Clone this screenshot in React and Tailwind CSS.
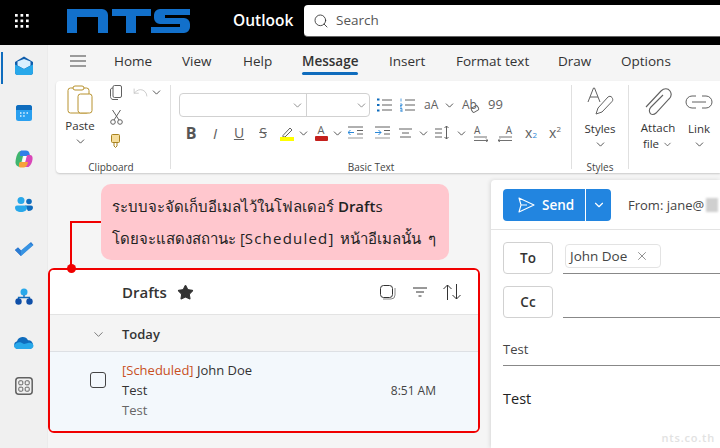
import React from "react";
import { ChevronDown, X, Star, Search, Undo } from "lucide-react";

const S = ({ w = 16, h = 16, children, className = "", vb }) => (
  <svg width={w} height={h} viewBox={vb || `0 0 ${w} ${h}`} fill="none" className={`shrink-0 ${className}`}>{children}</svg>
);
const Chev = ({ c = "text-[#333]", s = 13 }) => <ChevronDown size={s} strokeWidth={1.500} className={`shrink-0 ${c}`} />;

function Slot({ className, children }) {
  return <div className={`flex shrink-0 items-center justify-center ${className}`}>{children}</div>;
}

const gray = "#616161";

function Rail() {
  return (
    <div className="relative flex w-[48px] shrink-0 flex-col items-center border-r border-[#ebebeb] bg-[#f0f0f0] pt-[8px]">
      <div className="absolute left-[1px] top-[7px] h-[32px] w-[2px] bg-[#0f6cbd]" />
      <Slot className="h-[26px]">
        <S w={20} h={20}>
          <path d="M10 .5 19 6V16a3 3 0 0 1-3 3H4a3 3 0 0 1-3-3V6Z" fill="#0f5cab" />
          <path d="M3.500 5.500 10 3l6.500 2.500v4L10 13 3.500 9.500Z" fill="#d8f0ff" />
          <path d="M1 8.500 10 13l9-4.500V16a3 3 0 0 1-3 3H4a3 3 0 0 1-3-3Z" fill="#28a8ea" />
        </S>
      </Slot>
      <Slot className="mt-[21px] h-[26px]">
        <S w={16} h={16}>
          <rect x="0" y="0" width="16" height="16" rx="2.500" fill="#2aa0f0" />
          <path d="M0 2.500A2.500 2.500 0 0 1 2.500 0h11A2.500 2.500 0 0 1 16 2.500V5H0Z" fill="#0f6cbd" />
          <path d="M4 8h1.500M7.200 8h1.500M10.500 8h1.500M4 11h1.500M7.200 11h1.500" stroke="#dff2ff" strokeWidth="1.500" />
        </S>
      </Slot>
      <Slot className="mt-[20px] h-[26px]">
        <S w={18} h={18}>
          <path d="M6 1h4L7 17H5a4.500 4.500 0 0 1-4.500-5C1 7 2.500 1 6 1Z" fill="#3fb56f" />
          <path d="M6 .5h5c2 0 3 1 3.500 3L15 6H5C5 3 5 1 6 .5Z" fill="#2f7fe8" />
          <path d="M12 5h3c2 0 3 2 2.500 4.500-.5 3-1.500 6-4 7.500H9Z" fill="#d946b8" />
          <path d="M5 12h8c-.5 3-2 5.500-4 5.500H5C3.500 17.500 3.500 13 5 12Z" fill="#f7a13b" />
          <path d="M8 6h3.500L9.800 12H6.500Z" fill="#fff" fillOpacity=".9" />
        </S>
      </Slot>
      <Slot className="mt-[20px] h-[26px]">
        <S w={20} h={18}>
          <circle cx="7" cy="4.500" r="3.500" fill="#28a8ea" />
          <circle cx="15" cy="5.500" r="2.800" fill="#0f6cbd" />
          <path d="M11 9.500h6a2 2 0 0 1 2 2c0 2-1.500 3.500-5 3.500Z" fill="#0f6cbd" />
          <path d="M3 9.500h8a2 2 0 0 1 2 2c0 3-2.500 4.500-6 4.500s-6-1.500-6-4.500a2 2 0 0 1 2-2Z" fill="#28a8ea" />
        </S>
      </Slot>
      <Slot className="mt-[19px] h-[26px]">
        <S w={20} h={16}>
          <path d="M1 8l3-2.500 3 3L7 14Z" fill="#185abd" />
          <path d="M4 5.500 7 8.500 17 0l2.500 3L7 14 1 8Z" fill="#2b7cd3" />
          <path d="M7 8.500 15 2 19 3 7 14Z" fill="#41a5ee" fillOpacity=".6" />
        </S>
      </Slot>
      <Slot className="mt-[21px] h-[26px]">
        <S w={18} h={18}>
          <circle cx="9" cy="4" r="3.500" fill="#28a8ea" />
          <path d="M9 7v3M3.500 11V9.500h11V11" stroke="#0f6cbd" strokeWidth="1.300" />
          <circle cx="3.500" cy="13.500" r="3.200" fill="#0f4fa8" />
          <circle cx="14.500" cy="13.500" r="3.200" fill="#0f4fa8" />
        </S>
      </Slot>
      <Slot className="mt-[20px] h-[26px]">
        <S w={21} h={14}>
          <path d="M5 13a4 4 0 0 1-1-7.800 6 6 0 0 1 11-1A4.500 4.500 0 0 1 20 9c0 2-1 4-4 4Z" fill="#0f6cbd" />
          <path d="M1 9.500c2-3 5-4 7-3l3 1.500 4-1c3-.5 5 .5 5.500 2.500 0 2-1.500 3.500-4 3.500H5c-2.500 0-4-1.500-4-3.500Z" fill="#28a8ea" />
        </S>
      </Slot>
      <Slot className="mt-[17px] h-[26px]">
        <S w={18} h={18}>
          <rect x=".8" y=".8" width="16.400" height="16.400" rx="3" stroke={gray} strokeWidth="1.500" />
          <rect x="3.800" y="3.800" width="4" height="4" rx="1" stroke={gray} />
          <rect x="10.200" y="3.800" width="4" height="4" rx="1" stroke={gray} />
          <rect x="3.800" y="10.200" width="4" height="4" rx="1" stroke={gray} />
          <rect x="10.200" y="10.200" width="4" height="4" rx="1" stroke={gray} />
        </S>
      </Slot>
    </div>
  );
}

function TopBar() {
  return (
    <div className="flex h-[45px] shrink-0 items-center bg-black pb-[3px]">
      <Slot className="ml-[14px] h-[16px] w-[16px]">
        <svg width="16" height="16" viewBox="0 0 16 16" fill="#fff">
          {[1, 6.500, 12].flatMap((x) => [1, 6.500, 12].map((y) => <rect key={`${x}${y}`} x={x} y={y} width="2.700" height="2.700" />))}
        </svg>
      </Slot>
      <svg width="124" height="24" viewBox="0 0 124 24" fill="#1270cb" className="ml-[37px] shrink-0">
        <path d="M0 0H35a6 6 0 0 1 6 6V24H31V8H10V24H0Z" />
        <path d="M45 0H84V7H69V24H59V7H45Z" />
        <path d="M93 0H123V6H98V9H117a6 6 0 0 1 6 6v3a6 6 0 0 1-6 6H84V18H113V15H93a6 6 0 0 1-6-6V6a6 6 0 0 1 6-6Z" />
      </svg>
      <span className="ml-[42px] w-[59px] shrink-0 whitespace-nowrap text-[15.500px] font-semibold text-white">Outlook</span>
      <div className="ml-[12px] flex h-[32px] flex-1 items-center rounded-l-[4px] border-b border-[#666] bg-white pl-[9px] text-[13.500px] text-[#555]">
        <Search size={16} strokeWidth={1.300} className="text-[#333]" />
        <span className="ml-[7px]">Search</span>
      </div>
    </div>
  );
}

function Tabs() {
  return (
    <div className="flex h-[36px] shrink-0 items-center pb-[4px]">
      <S w={16} h={12} className="ml-[22px]">
        <path d="M0 1H16M0 6H16M0 11H16" stroke="#424242" strokeWidth="1.200" />
      </S>
      <div className="ml-[28px] flex items-center text-[13.500px] text-[#333]">
        <span className="w-[68px]">Home</span>
        <span className="w-[61px]">View</span>
        <span className="w-[59px]">Help</span>
        <span className="relative w-[87px] font-semibold">Message
          <span className="absolute left-0 top-[21px] h-[3px] w-[56px] rounded-full bg-[#0f6cbd]" />
        </span>
        <span className="w-[67px]">Insert</span>
        <span className="w-[102px]">Format text</span>
        <span className="w-[63px]">Draw</span>
        <span>Options</span>
      </div>
    </div>
  );
}

const Sep = () => <div className="my-[4px] w-px shrink-0 bg-[#e0e0e0]" />;
const GroupLabel = ({ children, className = "" }) => (
  <div className={`absolute bottom-[-1px] flex justify-center whitespace-nowrap text-[10px] leading-[14px] text-[#444] ${className}`}>{children}</div>
);

function Clipboard() {
  return (
    <div className="relative flex w-[114px] shrink-0">
      <div className="ml-[10px] flex w-[28px] flex-col items-center">
        <S w={26} h={29} className="mt-[4px]">
          <rect x="1" y="3" width="21" height="25" rx="2.500" stroke="#b8922e" />
          <rect x="6" y="1" width="11" height="4" rx="2" fill="#fff" stroke="#b8922e" />
          <rect x="11" y="9" width="14" height="19" rx="2.500" fill="#fff" stroke="#b8922e" />
        </S>
        <span className="mt-[3px] text-[11.500px] leading-[17px] text-[#333]">Paste</span>
        <div className="mt-[1px]"><Chev /></div>
      </div>
      <div className="ml-[11px] flex w-[58px] flex-col">
        <div className="mt-[1px] flex h-[20px] items-center">
          <Slot className="w-[22px]">
            <S w={12} h={15}>
              <rect x="3" y=".5" width="8.500" height="12" rx="1.500" stroke={gray} />
              <path d="M3 3C1.500 3 .5 3.500.5 5v6.500C.5 13 1.500 14.500 3 14.500h5" stroke={gray} />
            </S>
          </Slot>
          <Slot className="ml-[4px] w-[18px]"><Undo size={17} strokeWidth={1.200} className="text-[#c4c4c4]" /></Slot>
          <Slot className="w-[14px]"><Chev /></Slot>
        </div>
        <Slot className="mt-[5px] h-[20px] w-[22px]">
          <S w={13} h={15}>
            <circle cx="3" cy="12" r="2.300" stroke={gray} />
            <circle cx="10" cy="12" r="2.300" stroke={gray} />
            <path d="M4 10 10.500 0M9 10 2.500 0" stroke={gray} />
          </S>
        </Slot>
        <Slot className="mt-[4px] h-[20px] w-[22px]">
          <S w={10} h={14}>
            <rect x=".5" y=".5" width="8" height="8" rx="1" stroke="#a8821e" fill="#f5dd9c" />
            <path d="M3 8.500V12l1.500 1.500L6 12V8.500" stroke="#a8821e" />
          </S>
        </Slot>
      </div>
      <GroupLabel className="left-[34px] w-[42px]">Clipboard</GroupLabel>
    </div>
  );
}

const Arrowed = ({ left }) => (
  <div className={`flex w-[14px] flex-col ${left ? "items-end" : "items-start"}`}>
    <span className="text-[10px] leading-[10px] text-[#616161]">A</span>
    <S w={14} h={6} className="mt-[1px]">
      {left ? (
        <path d="M1 1H14M0 4.500H14M2 2.500 0 4.500 2 6" stroke={gray} strokeWidth=".9" />
      ) : (
        <path d="M0 1H13M0 4.500H14M12 2.500 14 4.500 12 6" stroke={gray} strokeWidth=".9" />
      )}
    </S>
  </div>
);

function BasicText() {
  return (
    <div className="relative w-[400px] shrink-0">
      <div className="ml-[8px] mt-[12px] flex h-[24px] items-center">
        <div className="flex h-[24px] w-[191px] shrink-0 rounded-[4px] border border-[#d1d1d1]">
          <div className="flex w-[127px] items-center justify-end border-r border-[#d1d1d1] pr-[2px]"><Chev c="text-[#777]" /></div>
          <div className="flex flex-1 items-center justify-end pr-[1px]"><Chev c="text-[#777]" /></div>
        </div>
        <Slot className="ml-[6px] w-[16px]">
          <S w={15} h={14}>
            <path d="M0 1.500h2.500M0 7h2.500M0 12.500h2.500" stroke="#0f6cbd" strokeWidth="2.200" />
            <path d="M5 2H15M5 7H15M5 12H15" stroke={gray} />
          </S>
        </Slot>
        <Slot className="ml-[8px] w-[15px]">
          <S w={15} h={14}>
            <path d="M1 .5v3M0 6h2v1.500H0V9h2M0 10.500h2V14H0M0 12.200h2" stroke="#2b88d8" strokeWidth=".8" />
            <path d="M5 2H15M5 7H15M5 12H15" stroke={gray} />
          </S>
        </Slot>
        <span className="ml-[9px] w-[14px] shrink-0 whitespace-nowrap text-[12px] text-[#616161]">aA</span>
        <Slot className="ml-[5px] w-[12px]"><Chev /></Slot>
        <span className="relative ml-[7px] w-[15px] shrink-0 whitespace-nowrap text-[12px] text-[#616161]">Ab
          <span className="absolute bottom-[2px] right-[-2px] h-[6px] w-[8px] rotate-[-30deg] rounded-[2px] border border-[#616161]" />
        </span>
        <span className="ml-[11px] shrink-0 text-[13px] text-[#616161]">99</span>
      </div>
      <div className="ml-[8px] mt-[4px] flex h-[24px] items-center text-[#616161]">
        <Slot className="w-[24px] text-[16px] font-bold leading-none text-[#555]">B</Slot>
        <Slot className="w-[24px] text-[15px] italic leading-none">I</Slot>
        <Slot className="w-[24px] text-[14px] leading-none underline">U</Slot>
        <Slot className="w-[24px] text-[14px] leading-none line-through">S</Slot>
        <Slot className="w-[24px]">
          <S w={14} h={15}>
            <path d="M3 9.500 10 2l2 2-7 7H3Z" stroke={gray} />
            <rect y="11" width="14" height="4" fill="#ffff00" />
          </S>
        </Slot>
        <Slot className="w-[8px]"><Chev /></Slot>
        <Slot className="ml-[2px] w-[24px]">
          <div className="flex flex-col items-center">
            <span className="text-[11px] leading-[10px]">A</span>
            <span className="mt-[1px] h-[5px] w-[13px] rounded-[1px] bg-[#c4201c]" />
          </div>
        </Slot>
        <Slot className="w-[8px]"><Chev /></Slot>
        <Slot className="ml-[2px] w-[24px]">
          <S w={15} h={14}>
            <path d="M0 1H15M9 4.500H15M9 8H15" stroke={gray} />
            <path d="M6 6.500H0M2.500 4 0 6.500 2.500 9" stroke="#2b88d8" />
            <path d="M0 12H15" stroke="#bbb" strokeWidth="1.500" />
          </S>
        </Slot>
        <Slot className="ml-[3px] w-[24px]">
          <S w={15} h={14}>
            <path d="M0 1H15M9 4.500H15M9 8H15" stroke={gray} />
            <path d="M0 6.500H6M3.500 4 6 6.500 3.500 9" stroke="#2b88d8" />
            <path d="M0 12H15" stroke="#bbb" strokeWidth="1.500" />
          </S>
        </Slot>
        <Slot className="ml-[-1px] w-[24px]">
          <S w={13} h={12}><path d="M0 2H13M3 6H10M1 10H12" stroke={gray} /></S>
        </Slot>
        <Slot className="ml-[2px] w-[8px]"><Chev /></Slot>
        <Slot className="ml-[3px] w-[24px]">
          <S w={14} h={14}>
            <path d="M0 3H7M0 7H7M0 11H7" stroke={gray} />
            <path d="M11.500 0V13M9.500 2 11.500 0 13.500 2M9.500 11 11.500 13 13.500 11" stroke={gray} />
          </S>
        </Slot>
        <Slot className="ml-[3px] w-[8px]"><Chev /></Slot>
        <Slot className="ml-[4px] w-[24px]"><Arrowed /></Slot>
        <Slot className="w-[24px]"><Arrowed left /></Slot>
        <Slot className="ml-[2px] w-[24px] text-[14px] leading-none">x<sub className="text-[8px] text-[#2b88d8]">2</sub></Slot>
        <Slot className="w-[24px] text-[14px] leading-none">x<sup className="text-[8px] text-[#616161]">2</sup></Slot>
      </div>
      <GroupLabel className="left-[170px] w-[60px]">Basic Text</GroupLabel>
    </div>
  );
}

function Styles() {
  return (
    <div className="relative flex w-[56px] shrink-0 flex-col items-center">
      <S w={27} h={29} className="mt-[6px]">
        <path d="M1 15 6.500 1h1L13 15M3 10h8" stroke={gray} />
        <path d="M9 27l2-6L21 10c1-1 3-1 4 .5s1 3 0 4L15 25Z" stroke={gray} fill="#fff" />
      </S>
      <span className="mt-[4px] text-[11.500px] leading-[17px] text-[#333]">Styles</span>
      <div className="mt-[1px]"><Chev /></div>
      <GroupLabel className="left-0 w-full">Styles</GroupLabel>
    </div>
  );
}

function Attach() {
  return (
    <div className="flex flex-1 pl-[11px]">
      <div className="flex w-[36px] shrink-0 flex-col items-center">
        <S w={30} h={29} className="mt-[6px]">
          <path d="M3 20 18 4c3-3 7-3 9 0s1 6-1 8L13 26c-2 2-5 2-6 0s-1-4 1-6L20 8" stroke={gray} strokeWidth="1.100" />
        </S>
        <span className="mt-[4px] text-[11.500px] leading-[16px] text-[#333]">Attach</span>
        <span className="flex items-center gap-[3px] text-[11.500px] leading-[16px] text-[#333]">file <Chev s={11} /></span>
      </div>
      <div className="ml-[8px] flex w-[30px] shrink-0 flex-col items-center">
        <S w={28} h={14} className="mt-[14px]">
          <path d="M11 1H7a6 6 0 0 0 0 12h4M17 1h4a6 6 0 0 1 0 12h-4M7 7H21" stroke={gray} />
        </S>
        <span className="mt-[11px] text-[11.500px] leading-[17px] text-[#333]">Link</span>
        <div className="mt-[1px]"><Chev /></div>
      </div>
    </div>
  );
}

function Ribbon() {
  return (
    <div className="ml-[8px] flex h-[92px] shrink-0 rounded-l-[4px] bg-white shadow-[0_1px_2px_rgba(0,0,0,0.18)]">
      <Clipboard />
      <Sep />
      <BasicText />
      <Sep />
      <Styles />
      <Sep />
      <Attach />
    </div>
  );
}

function Drafts() {
  return (
    <div className="relative mt-[8px] w-[432px] overflow-hidden rounded-[6px] border-2 border-[#f00000] bg-white">
      <div className="flex h-[45px] items-center border-b border-[#e3e3e3] bg-white pl-[72px] pr-[17px]">
        <span className="text-[15px] font-semibold text-[#333]">Drafts</span>
        <Star size={17} fill="#333" strokeWidth={1.500} className="ml-[10px] text-[#333]" />
        <S w={16} h={16} className="ml-auto">
          <rect x=".5" y="1.500" width="12" height="12" rx="3" stroke="#333" />
          <path d="M3 15h8a4 4 0 0 0 4-4V4" stroke="#888" />
        </S>
        <S w={14} h={10} className="ml-[17px]"><path d="M0 1H14M3 5H11M5.500 9H8.500" stroke="#333" /></S>
        <S w={18} h={16} className="ml-[16px]">
          <path d="M4.500 16V1M.5 5 4.500 1 8.500 5M13.500 0V15M9.500 11 13.500 15 17.500 11" stroke="#333" />
        </S>
      </div>
      <div className="flex h-[37px] items-center border-b border-[#dde0e4] bg-[#f4f4f4] pl-[41px] pt-[3px]">
        <ChevronDown size={15} strokeWidth={1.100} className="text-[#444]" />
        <span className="ml-[16px] text-[13px] font-semibold text-[#333]">Today</span>
      </div>
      <div className="flex h-[79px] items-start bg-[#f3f8fc] pl-[40px] pr-[42px]">
        <div className="mt-[20px] h-[16px] w-[16px] shrink-0 rounded-[3px] border-[1.500px] border-[#444]" />
        <div className="ml-[16px] flex flex-1 flex-col pt-[8px] text-[13px] leading-[20px] text-[#333]">
          <div><span className="text-[#c8501e]">[Scheduled]</span> John Doe</div>
          <div>Test</div>
          <div className="text-[#666]">Test</div>
        </div>
        <span className="mt-[29px] text-[12px] leading-[20px] text-[#444]">8:51 AM</span>
      </div>
    </div>
  );
}

function LeftPane() {
  return (
    <div className="relative w-[443px] shrink-0 pt-[11px]">
      <div className="ml-[53px] flex h-[76px] w-[348px] flex-col justify-center gap-[3px] rounded-[10px] bg-[#ffc7ce] pl-[11px] text-[15px] leading-[29px] text-[#222]">
        <div>ระบบจะจัดเก็บอีเมลไว้ในโฟลเดอร์ <span className="font-semibold">Draft</span>s</div>
        <div>โดยจะแสดงสถานะ [<span className="font-medium tracking-[1.200px]">Scheduled</span>] <span className="ml-[3px]">หน้าอีเมลนั้น</span> <span className="ml-[3px]">ๆ</span></div>
      </div>
      <div className="absolute left-[22px] top-[48px] h-[47px] w-[31px] border-l-2 border-t-2 border-[#f00000]" />
      <div className="absolute left-[19px] top-[91px] z-10 h-[9px] w-[9px] rounded-full bg-[#f00000]" />
      <Drafts />
    </div>
  );
}

function Compose() {
  return (
    <div className="mt-[7px] flex flex-1 flex-col overflow-hidden rounded-tl-[4px] bg-white shadow-[-1px_0_4px_rgba(0,0,0,0.12)]">
      <div className="flex h-[50px] shrink-0 items-start border-b border-[#e3e3e3] pl-[12px] pt-[9px]">
        <div className="flex h-[32px] w-[108px] shrink-0 rounded-[4px] bg-[#2285e0] text-white">
          <div className="flex w-[83px] items-center border-r border-white pl-[15px]">
            <S w={17} h={16}><path d="M1 1 16 8 1 15 3 8ZM3 8H9" stroke="#fff" strokeWidth="1.100" strokeLinejoin="round" /></S>
            <span className="ml-[7px] text-[13.500px] font-semibold">Send</span>
          </div>
          <div className="flex flex-1 items-center justify-center"><ChevronDown size={14} strokeWidth={2} /></div>
        </div>
        <span className="ml-[17px] mt-[6px] whitespace-nowrap text-[13px] font-medium leading-[20px] text-[#444]">From: jane@</span>
        <div className="ml-[2px] mt-[9px] h-[14px] w-[12px] shrink-0 bg-[#cfcfcf] blur-[1px]" />
      </div>
      <div className="mt-[12px] flex shrink-0 pl-[12px]">
        <button className="h-[32px] w-[50px] rounded-[4px] border border-[#d1d1d1] text-[13.500px] font-semibold text-[#333]">To</button>
        <div className="ml-[10px] flex h-[32px] flex-1 items-start border-b border-[#888] pl-[2px] pt-[2px]">
          <div className="flex h-[24px] w-[96px] items-center rounded-[4px] border border-[#e3e3e3] pl-[4px] text-[13.500px] text-[#444]">
            John Doe <X size={14} strokeWidth={1} className="ml-[8px]" />
          </div>
        </div>
      </div>
      <div className="mt-[12px] flex shrink-0 pl-[12px]">
        <button className="h-[32px] w-[50px] rounded-[4px] border border-[#d1d1d1] text-[13.500px] font-semibold text-[#333]">Cc</button>
        <div className="ml-[10px] flex h-[32px] flex-1 border-b border-[#888]" />
      </div>
      <div className="ml-[12px] mt-[16px] flex h-[32px] shrink-0 items-center border-b border-[#888] text-[13px] text-[#444]">Test</div>
      <div className="ml-[12px] mt-[23px] text-[14.500px] leading-[20px] text-[#222]">Test</div>
      <div className="mr-[5px] mt-[22px] text-right text-[11px] font-semibold leading-[14px] tracking-[0.8px] text-[#e2e2e2]">nts.co.th</div>
    </div>
  );
}

export default function App() {
  return (
    <div className="flex h-[448px] w-[720px] flex-col overflow-hidden bg-[#f5f5f5] font-['Open_Sans','Noto_Sans',sans-serif]">
      <TopBar />
      <div className="flex min-h-0 flex-1">
        <Rail />
        <div className="flex min-w-0 flex-1 flex-col">
          <Tabs />
          <Ribbon />
          <div className="flex min-h-0 flex-1">
            <LeftPane />
            <Compose />
          </div>
        </div>
      </div>
    </div>
  );
}
